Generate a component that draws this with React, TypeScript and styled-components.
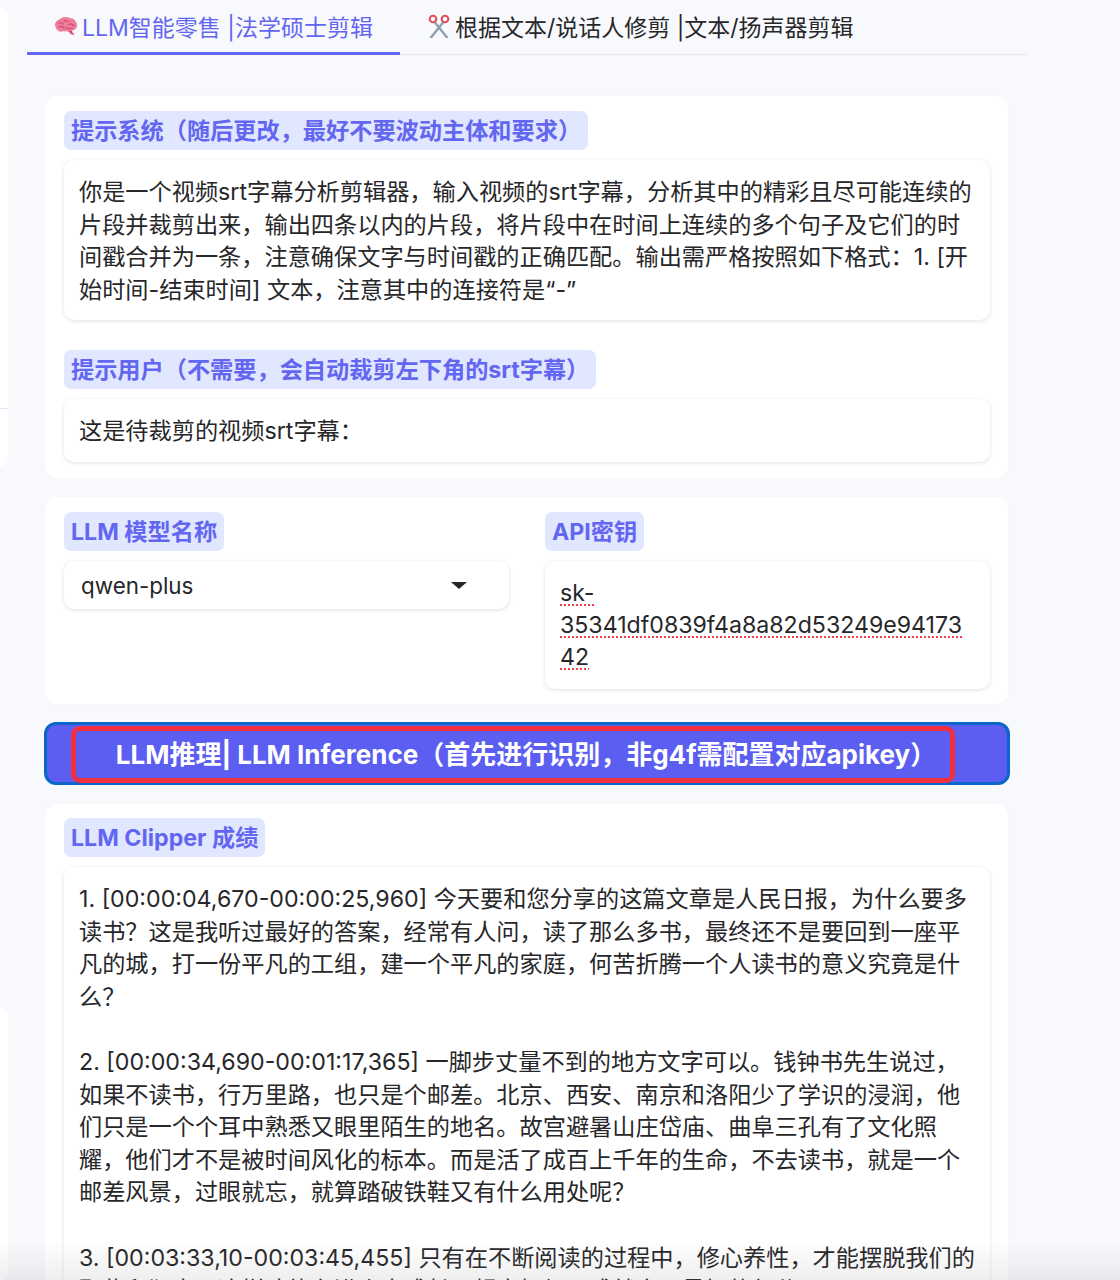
import styled, { createGlobalStyle } from 'styled-components';

const GlobalStyle = createGlobalStyle`
  html, body {
    margin: 0;
    padding: 0;
    background: #f8f9fc;
  }
  body {
    font-family: Inter, "Noto Sans CJK SC", sans-serif;
    color: #27272a;
  }
`;

const Page = styled.div`
  position: relative;
  display: flex;
  width: 1120px;
  height: 1280px;
  overflow: hidden;
  background: #f8f9fc;
`;

const BottomFade = styled.div`
  position: absolute;
  left: 0;
  right: 0;
  bottom: 0;
  height: 40px;
  background: linear-gradient(rgba(120, 120, 125, 0), rgba(120, 120, 125, 0.12));
  pointer-events: none;
`;

const Sidebar = styled.div`
  flex: 0 0 8px;
  display: flex;
  flex-direction: column;
  padding-top: 8px;
  gap: 541px;
`;

const SideCard = styled.div<{ $height: number }>`
  height: ${p => p.$height}px;
  padding-top: 400px;
  box-sizing: border-box;
  background: #fff;
  border-radius: 0 8px 8px 0;
  &:last-child {
    padding-top: 0;
  }
`;

const SideLine = styled.div`
  height: 1px;
  background: #e5e7eb;
`;

const Main = styled.main`
  margin-left: 19px;
  width: 1000px;
`;

const TabBar = styled.div`
  display: flex;
  height: 55px;
  box-sizing: border-box;
  border-bottom: 1px solid #e5e7eb;
`;

const Tab = styled.div<{ $active?: boolean }>`
  display: flex;
  align-items: center;
  gap: 4px;
  box-sizing: border-box;
  height: 55px;
  padding: 0 27px;
  font-size: 23px;
  white-space: nowrap;
  color: ${p => (p.$active ? '#6366f1' : '#27272a')};
  border-bottom: 3px solid ${p => (p.$active ? '#6366f1' : 'transparent')};
`;

const Content = styled.div`
  margin: 41px 0 0 18px;
  width: 963px;
  display: flex;
  flex-direction: column;
`;

const Panel = styled.section`
  box-sizing: border-box;
  padding: 15px 18px 15px 19px;
  background: #fff;
  border-radius: 12px;
  box-shadow: 0 0 2px rgba(0, 0, 0, 0.02);
`;

const TopPanel = styled(Panel)`
  height: 382px;
  margin-bottom: 19px;
`;

const ModelPanel = styled(Panel)`
  height: 207px;
  display: grid;
  grid-template-columns: 445px 445px;
  column-gap: 36px;
  align-items: start;
`;

const Tag = styled.div`
  width: fit-content;
  height: 39px;
  line-height: 41px;
  padding: 0 7px;
  font-size: 23.2px;
  font-weight: 700;
  color: #6366f1;
  background: #e0e7ff;
  border-radius: 7px;
  white-space: nowrap;
`;

const TextCard = styled.div<{ $height?: number }>`
  box-sizing: border-box;
  margin-top: 10px;
  padding: 16px 15px 15px;
  height: ${p => (p.$height ? `${p.$height}px` : 'auto')};
  font-size: 23.2px;
  line-height: 32.6px;
  color: #27272a;
  background: #fff;
  border-radius: 10px;
  box-shadow: 0 1px 4px rgba(0, 0, 0, 0.12);
`;

const Line = styled.div`
  white-space: nowrap;
`;

const Spacer = styled.div`
  height: 32.6px;
`;

const Section = styled.div`
  margin-bottom: 30px;
  &:last-child {
    margin-bottom: 0;
  }
`;

const Select = styled.div`
  box-sizing: border-box;
  height: 48px;
  margin-top: 10px;
  padding: 0 42px 0 17px;
  display: flex;
  align-items: center;
  justify-content: space-between;
  font-size: 22.4px;
  background: #fff;
  border-radius: 10px;
  box-shadow: 0 1px 4px rgba(0, 0, 0, 0.12);
`;

const Caret = styled.span`
  width: 0;
  height: 0;
  border-left: 8px solid transparent;
  border-right: 8px solid transparent;
  border-top: 7px solid #27272a;
`;

const KeyBox = styled(TextCard)`
  height: 128px;
  padding: 16px 15px 15px;
  font-size: 23.15px;
  line-height: 32px;
`;

const Misspelled = styled.span`
  text-decoration: underline dotted #f0404f 2px;
  text-underline-offset: 3px;
`;

const RunButton = styled.button`
  position: relative;
  box-sizing: border-box;
  width: 966px;
  height: 63px;
  margin: 18px 0 19px -1px;
  padding: 0 2px 2px 0;
  font-family: inherit;
  font-size: 26px;
  font-weight: 700;
  color: #fff;
  background: #5b5ef0;
  border: 3px solid #0a66c8;
  border-radius: 12px;
  white-space: nowrap;
`;

const Highlight = styled.span`
  position: absolute;
  top: 1px;
  left: 24px;
  width: 884px;
  height: 57px;
  box-sizing: border-box;
  border: 5px solid #f0303f;
  border-radius: 9px;
`;

const ResultPanel = styled(Panel)`
  padding-top: 14px;
  flex: 1;
`;

function BrainIcon() {
  return (
    <svg width="24" height="21" viewBox="0 0 24 21">
      <path d="M1.500 11C0 7.500 2.500 4 5.500 3.500C8 0.500 13 0.500 16 2C19.500 2 22.500 5 23 8.500C23.500 12 21 14.500 18 14.500C16.500 16 14 16 12.500 15C11 16 9.500 15 8 15.500C5 16.500 2.500 14 1.500 11Z" fill="#ee7f9c" />
      <path d="M14.500 15C15.500 18 18.500 19.500 21 18.500C19 17.500 18 16 18 14.500Z" fill="#d94f78" />
      <path d="M5 7C7 6 8.500 7 9.500 8M10 4C11.500 5.500 13.500 5.500 15 5M14.500 8.500C16.500 7.500 18.500 8 20 10M4.500 11C7 10 9.500 11 10.500 12.500M12.500 11.500C14 13 16 13 18 12" fill="none" stroke="#d44f76" strokeWidth="1.300" strokeLinecap="round" />
    </svg>
  );
}

function ScissorsIcon() {
  return (
    <svg width="24" height="24" viewBox="0 0 24 24">
      <path d="M8 8.500L20 23.500M16 8.500L4 23.500" fill="none" stroke="#8f9fb0" strokeWidth="2.400" strokeLinecap="round" />
      <circle cx="6" cy="5" r="3.300" fill="none" stroke="#e0505c" strokeWidth="2.100" />
      <circle cx="18" cy="5" r="3.300" fill="none" stroke="#e0505c" strokeWidth="2.100" />
    </svg>
  );
}

const systemPrompt = [
  '你是一个视频srt字幕分析剪辑器，输入视频的srt字幕，分析其中的精彩且尽可能连续的',
  '片段并裁剪出来，输出四条以内的片段，将片段中在时间上连续的多个句子及它们的时',
  '间戳合并为一条，注意确保文字与时间戳的正确匹配。输出需严格按照如下格式：1. [开',
  '始时间-结束时间] 文本，注意其中的连接符是“-”',
];

const results = [
  [
    '1. [00:00:04,670-00:00:25,960] 今天要和您分享的这篇文章是人民日报，为什么要多',
    '读书？这是我听过最好的答案，经常有人问，读了那么多书，最终还不是要回到一座平',
    '凡的城，打一份平凡的工组，建一个平凡的家庭，何苦折腾一个人读书的意义究竟是什',
    '么？',
  ],
  [
    '2. [00:00:34,690-00:01:17,365] 一脚步丈量不到的地方文字可以。钱钟书先生说过，',
    '如果不读书，行万里路，也只是个邮差。北京、西安、南京和洛阳少了学识的浸润，他',
    '们只是一个个耳中熟悉又眼里陌生的地名。故宫避暑山庄岱庙、曲阜三孔有了文化照',
    '耀，他们才不是被时间风化的标本。而是活了成百上千年的生命，不去读书，就是一个',
    '邮差风景，过眼就忘，就算踏破铁鞋又有什么用处呢？',
  ],
  [
    '3. [00:03:33,10-00:03:45,455] 只有在不断阅读的过程中，修心养性，才能摆脱我们的',
    '那些和狂妄。这样才能在进步中成长，超出框架，成就自己最好的部分',
  ],
];

export default function App() {
  return (
    <Page>
      <GlobalStyle />
      <Sidebar>
        <SideCard $height={464}>
          <SideLine />
        </SideCard>
        <SideCard $height={300} />
      </Sidebar>
      <Main>
        <TabBar>
          <Tab $active>
            <BrainIcon />
            <span>LLM智能零售 |法学硕士剪辑</span>
          </Tab>
          <Tab>
            <ScissorsIcon />
            <span>根据文本/说话人修剪 |文本/扬声器剪辑</span>
          </Tab>
        </TabBar>
        <Content>
          <TopPanel>
            <Section>
              <Tag>提示系统（随后更改，最好不要波动主体和要求）</Tag>
              <TextCard $height={160}>
                {systemPrompt.map(line => (
                  <Line key={line}>{line}</Line>
                ))}
              </TextCard>
            </Section>
            <Section>
              <Tag>提示用户（不需要，会自动裁剪左下角的srt字幕）</Tag>
              <TextCard $height={63}>
                <Line>这是待裁剪的视频srt字幕：</Line>
              </TextCard>
            </Section>
          </TopPanel>
          <ModelPanel>
            <div>
              <Tag>LLM 模型名称</Tag>
              <Select>
                qwen-plus
                <Caret />
              </Select>
            </div>
            <div>
              <Tag>API密钥</Tag>
              <KeyBox>
                <Line><Misspelled>sk-</Misspelled></Line>
                <Line><Misspelled>35341df0839f4a8a82d53249e94173</Misspelled></Line>
                <Line><Misspelled>42</Misspelled></Line>
              </KeyBox>
            </div>
          </ModelPanel>
          <RunButton>
            <Highlight />
            LLM推理| LLM Inference（首先进行识别，非g4f需配置对应apikey）
          </RunButton>
          <ResultPanel>
            <Tag>LLM Clipper 成绩</Tag>
            <TextCard>
              {results.map((block, i) => (
                <div key={i}>
                  {i > 0 && <Spacer />}
                  {block.map(line => (
                    <Line key={line}>{line}</Line>
                  ))}
                </div>
              ))}
            </TextCard>
          </ResultPanel>
        </Content>
      </Main>
      <BottomFade />
    </Page>
  );
}
